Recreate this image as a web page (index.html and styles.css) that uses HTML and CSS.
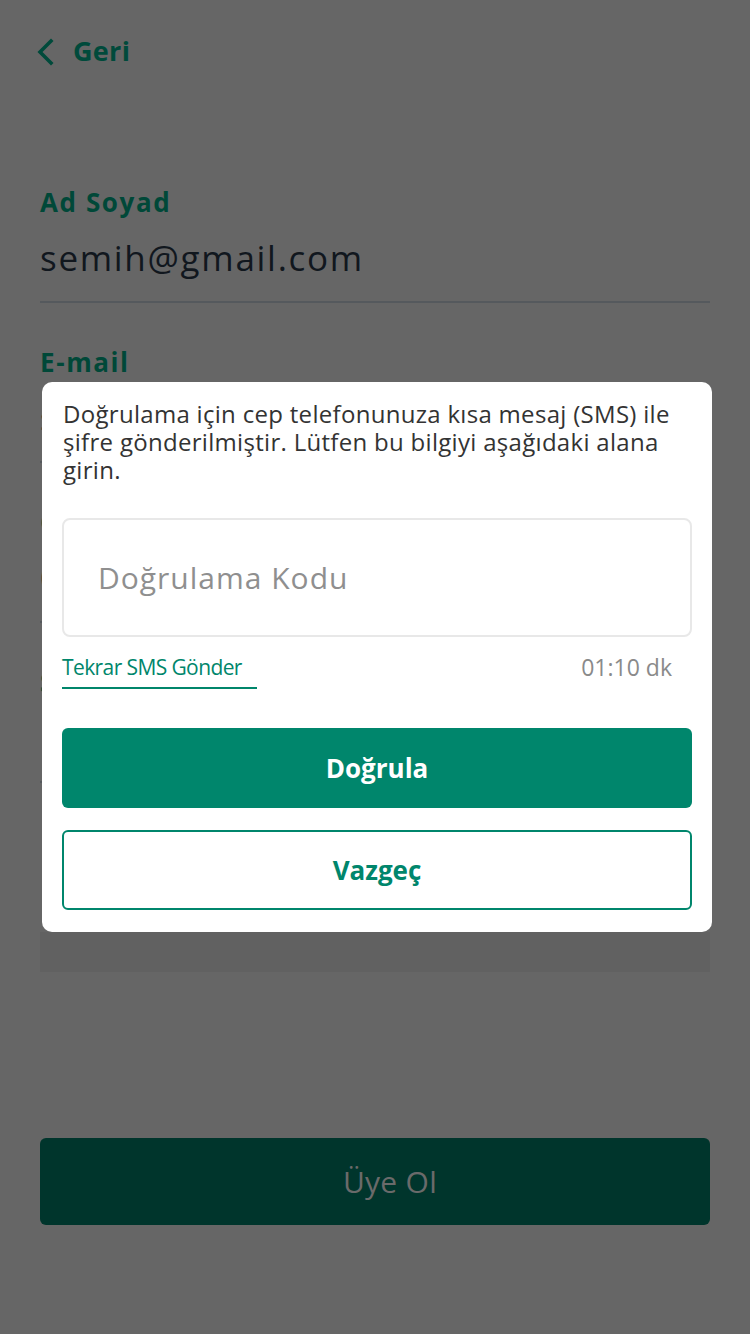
FILE: index.html
```html
<!DOCTYPE html>
<html lang="tr">
<head>
<meta charset="utf-8">
<link rel="stylesheet" href="styles.css">
</head>
<body>
<div class="page">
  <div class="topbar">
    <svg class="chev" width="20" height="28" viewBox="0 0 20 28"><path d="M15 3 L4 14 L15 25" fill="none" stroke="#004a3b" stroke-width="3.6" stroke-linecap="square"/></svg>
    <span class="back">Geri</span>
  </div>
  <div class="form">
    <div class="field">
      <div class="label">Ad Soyad</div>
      <div class="value">semih@gmail.com</div>
    </div>
    <div class="field">
      <div class="label">E-mail</div>
      <div class="value">semih@gmail.com</div>
    </div>
    <div class="field">
      <div class="label">Cep Telefonu</div>
      <div class="value">0555 555 55 55</div>
    </div>
    <div class="field">
      <div class="label">Şifre</div>
      <div class="value">••••••</div>
    </div>
    <div class="note"></div>
  </div>
  <div class="submit">Üye Ol</div>

  <div class="modal">
    <p class="msg">Doğrulama için cep telefonunuza kısa mesaj (SMS) ile şifre gönderilmiştir. Lütfen bu bilgiyi aşağıdaki alana girin.</p>
    <div class="code">Doğrulama Kodu</div>
    <div class="row">
      <span class="resend">Tekrar SMS Gönder</span>
      <span class="timer">01:10 dk</span>
    </div>
    <div class="btn primary">Doğrula</div>
    <div class="btn outline">Vazgeç</div>
  </div>
</div>
</body>
</html>
```
FILE: styles.css
```css
* { box-sizing: border-box; }
html, body { margin: 0; padding: 0; }
body {
  background: #666666;
  font-family: "Open Sans", "Liberation Sans", sans-serif;
  width: 750px;
  height: 1334px;
  overflow: hidden;
}
.page {
  position: relative;
  width: 750px;
  height: 1334px;
  padding: 0 40px;
  display: flex;
  flex-direction: column;
}
.topbar {
  display: flex;
  align-items: center;
  gap: 17px;
  height: 50px;
  margin-top: 25px;
  margin-left: -4px;
}
.chev { display: block; margin-top: 3px; }
.back {
  color: #004a3b;
  font-weight: 700;
  font-size: 27px;
  letter-spacing: 0.3px;
}
.form {
  margin-top: 110px;
  display: flex;
  flex-direction: column;
  gap: 42px;
}
.field {
  border-bottom: 2px solid #55595d;
  padding-bottom: 21px;
}
.label {
  color: #004838;
  font-weight: 700;
  font-size: 26px;
  letter-spacing: 1.6px;
  line-height: 34px;
}
.value {
  color: #11171e;
  font-size: 35px;
  letter-spacing: 1.7px;
  line-height: 44px;
  margin-top: 17px;
}
.note {
  margin-top: 107px;
  height: 40px;
  background: #616161;
}
.submit {
  margin-top: 166px;
  height: 87px;
  border-radius: 6px;
  background: #00352c;
  color: #6a6a6a;
  font-size: 30px;
  letter-spacing: 0.3px;
  padding-left: 30px;
  display: flex;
  align-items: center;
  justify-content: center;
}
.modal {
  position: absolute;
  left: 42px;
  top: 382px;
  width: 670px;
  background: #ffffff;
  border-radius: 10px;
  padding: 18px 20px 22px 20px;
}
.msg {
  margin: 0 0 0 1px;
  color: #333333;
  font-size: 24px;
  letter-spacing: 0.3px;
  line-height: 28px;
}
.code {
  margin-top: 34px;
  height: 119px;
  border: 2px solid #e8e8e8;
  border-radius: 8px;
  padding-left: 34px;
  display: flex;
  align-items: center;
  color: #8f8f8f;
  font-size: 30px;
  letter-spacing: 1px;
}
.row {
  margin-top: 15px;
  display: flex;
  justify-content: space-between;
  align-items: flex-start;
}
.resend {
  color: #00866b;
  font-size: 21px;
  letter-spacing: -0.6px;
  line-height: 30px;
  padding-bottom: 5px;
  border-bottom: 2px solid #00866b;
  width: 195px;
}
.timer {
  color: #8a8a8a;
  font-size: 23px;
  line-height: 30px;
  margin-right: 20px;
}
.btn {
  height: 80px;
  border-radius: 6px;
  display: flex;
  align-items: center;
  justify-content: center;
  font-weight: 700;
  font-size: 26px;
}
.primary {
  margin-top: 39px;
  background: #00866c;
  color: #ffffff;
}
.outline {
  margin-top: 22px;
  border: 2px solid #00866c;
  color: #00866c;
}
```
